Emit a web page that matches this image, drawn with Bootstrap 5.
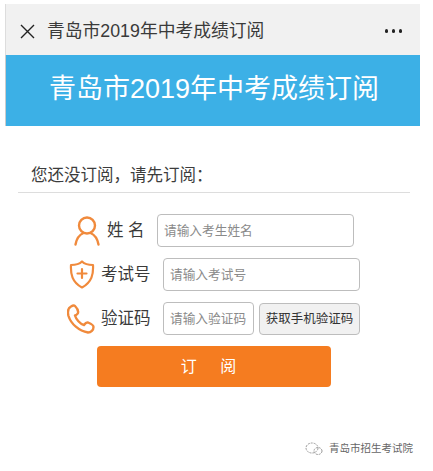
<!DOCTYPE html>
<html lang="zh-CN">
<head>
  <meta charset="UTF-8">
  <title>青岛市2019年中考成绩订阅</title>
  <meta name="viewport" content="width=device-width, initial-scale=1">
  <link href="https://cdn.jsdelivr.net/npm/bootstrap@5.3.3/dist/css/bootstrap.min.css" rel="stylesheet">
  <style>
    body {
      background: #fff;
      font-family: "Liberation Sans", "Noto Sans CJK SC", sans-serif;
      color: #333;
    }
    .phone-frame { width: 414px; margin: 4px 0 0 6px; }
    .top-bar { height: 51px; background: #f1f1f1; padding: 3px 18px 0 14px; color: #3a3a3a; font-size: 17.8px; box-shadow: -1px 0 0 #ddd; }
    .top-bar-title { margin-left: 12px; }
    .dots { display: flex; gap: 3.5px; }
    .dots i { width: 3.5px; height: 3.5px; border-radius: 50%; background: #222; }
    .blue-head { height: 71px; background: #3cb0e6; color: #fff; font-size: 27px; padding: 0 0 3px 2px; box-shadow: -1px 0 0 #ccc; }
    .notice { margin: 0 10px 0 12px; height: 67px; padding: 36px 0 0 13px; border-bottom: 1px solid #ddd; font-size: 16.5px; line-height: 27px; color: #3c3c3c; }
    .form-row { height: 33px; }
    .row-name { margin: 21px 0 0 68px; }
    .row-exam { margin: 11px 0 0 61px; }
    .row-code { margin: 11px 0 0 61px; }
    .form-row svg { flex: none; }
    .field-label { font-size: 16.5px; color: #3a3a3a; white-space: nowrap; }
    .row-name .field-label { width: 37px; margin: 0 13px 0 7px; font-size: 16.5px; }
    .row-exam .field-label, .row-code .field-label { width: 49px; margin: 0 13px 0 6px; }
    .field-box.form-control {
      height: 33px; padding: 0 6px; font-size: 12.7px; color: #555;
      border: 1px solid #bdbdbd; border-radius: 4px; box-shadow: none;
    }
    .field-box.form-control::placeholder { color: #8a8a8a; opacity: 1; }
    .wide-box { width: 197px; }
    .short-box { width: 91px; }
    .sms-btn.btn {
      width: 101px; height: 32px; margin: 1px 0 0 5px; padding: 0; font-size: 12.5px; white-space: nowrap;
      color: #333; background: #f1f1f1; border: 1px solid #bdbdbd; border-radius: 4px;
    }
    .submit-btn.btn {
      display: block; width: 234px; height: 41px; margin: 11px 0 0 91px; padding: 0 11px 0 0; font-size: 16px;
      color: #fff; background: #f57c20; border: 0; border-radius: 4px; word-spacing: 19px;
    }
    .watermark { position: absolute; left: 305px; top: 441px; color: #666; font-size: 10.5px; gap: 6px; }
  </style>
</head>
<body>

<div class="phone-frame">
  <!-- title bar -->
  <div class="top-bar d-flex align-items-center">
    <svg width="15" height="15" viewBox="0 0 15 15" fill="none" stroke="#222" stroke-width="1.4"><path d="M1 1 14 14M14 1 1 14"/></svg>
    <span class="top-bar-title flex-grow-1">青岛市2019年中考成绩订阅</span>
    <span class="dots"><i></i><i></i><i></i></span>
  </div>

  <div class="blue-head d-flex align-items-center justify-content-center">青岛市2019年中考成绩订阅</div>

  <div class="notice">您还没订阅，请先订阅：</div>

  <form>
    <div class="form-row row-name d-flex align-items-center">
      <svg width="26" height="30" viewBox="0 0 26 30" fill="none" stroke="#f08a3c" stroke-width="2.4" stroke-linecap="round"><circle cx="13" cy="9.500" r="8"/><path d="M1.500 28.500C2.500 23 6 18.500 9.500 17M24.500 28.500C23.500 23 20 18.500 16.500 17"/></svg>
      <span class="field-label">姓 名</span>
      <input class="form-control field-box wide-box" type="text" placeholder="请输入考生姓名">
    </div>
    <div class="form-row row-exam d-flex align-items-center">
      <svg width="28" height="29" viewBox="0 0 28 29" fill="none" stroke="#f08a3c" stroke-width="2.200" stroke-linecap="round" stroke-linejoin="round"><path d="M15 1.500c2.500 2.500 7 3.500 11 3.500 .5 9-1 17-11 22.500C5 22 3.500 14 4 5c4 0 8.500-1 11-3.500Z"/><path d="M15 9v9M10.500 13.500h9"/></svg>
      <span class="field-label">考试号</span>
      <input class="form-control field-box wide-box" type="text" placeholder="请输入考试号">
    </div>
    <div class="form-row row-code d-flex align-items-center">
      <svg width="28" height="30" viewBox="0 0 28 30" fill="none" stroke="#f08a3c" stroke-width="2.400" stroke-linecap="round" stroke-linejoin="round"><path d="M4 2.500C1 4 .5 8 1.500 12 4 20 12 27 21 28.500c3 0 5.500-2.500 5.500-5.500 0-2-3-3.500-5.500-4.500-2-.5-3 1-4 2.500-4-1-8-6-9-9.500 2-.5 3.500-2.500 3-4C11 5 9.500 3.500 8 2 7 1 5.500 1.500 4 2.500Z"/></svg>
      <span class="field-label">验证码</span>
      <input class="form-control field-box short-box" type="text" placeholder="请输入验证码">
      <button class="btn sms-btn" type="button">获取手机验证码</button>
    </div>
    <button class="btn submit-btn" type="button">订 阅</button>
  </form>
</div>

<div class="watermark d-flex align-items-center">
  <svg width="18" height="14" viewBox="0 0 18 14" fill="none" stroke="#999" stroke-width="1" stroke-dasharray="2 1"><ellipse cx="7" cy="6" rx="6" ry="5"/><ellipse cx="13" cy="9" rx="4" ry="3.500"/></svg>
  <span>青岛市招生考试院</span>
</div>

<script src="https://cdn.jsdelivr.net/npm/bootstrap@5.3.3/dist/js/bootstrap.bundle.min.js"></script>
</body>
</html>
